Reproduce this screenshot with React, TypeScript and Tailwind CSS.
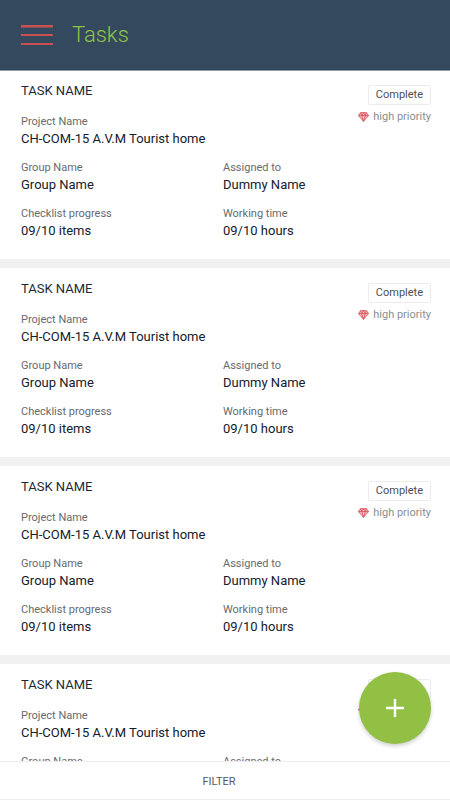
const tasks = [1, 2, 3, 4].map((id) => ({
  id,
  name: "TASK NAME",
  project: "CH-COM-15 A.V.M Tourist home",
  group: "Group Name",
  assignee: "Dummy Name",
  progress: "09/10 items",
  time: "09/10 hours",
  status: "Complete",
  priority: "high priority",
}));

type Task = (typeof tasks)[number];

function GemIcon() {
  return (
    <svg viewBox="0 0 24 22" className="h-2.5 w-[11px] shrink-0" fill="#f6c9cb" stroke="#d5474f" strokeWidth="1.8" strokeLinejoin="round" aria-hidden>
      <path d="M5.5 1.5h13L23 8 12 20.5 1 8z" />
      <path d="M1 8h22M5.5 1.5 8 8l4-6.5L16 8l2.5-6.5M8 8l4 12.5L16 8" fill="none" />
    </svg>
  );
}

function Field({ label, value }: { label: string; value: string }) {
  return (
    <div>
      <dt className="text-[11px] leading-4 text-[#666b70]">{label}</dt>
      <dd className="text-[13px] leading-[18px] text-[#15202b]">{value}</dd>
    </div>
  );
}

function TaskCard({ task }: { task: Task }) {
  return (
    <li className="relative border-b-9 border-[#f1f1f1] bg-white pt-[11px] pr-[25px] pb-[19px] pl-[21px]">
      <h2 className="text-[13px] leading-5 text-[#1c2a38]">{task.name}</h2>
      <dl className="mt-[13px] grid grid-cols-2 gap-y-3">
        <div className="col-span-2">
          <Field label="Project Name" value={task.project} />
        </div>
        <Field label="Group Name" value={task.group} />
        <Field label="Assigned to" value={task.assignee} />
        <Field label="Checklist progress" value={task.progress} />
        <Field label="Working time" value={task.time} />
      </dl>
      <div className="absolute top-[15px] right-[19px] flex flex-col items-end gap-1">
        <span className="rounded-xs border border-[#ececec] px-[7px] text-[11px] leading-[18px] text-[#4b4f54]">{task.status}</span>
        <span className="flex items-center gap-1 text-[11px] leading-4 text-[#8b8e91]">
          <GemIcon />
          {task.priority}
        </span>
      </div>
    </li>
  );
}

export default function App() {
  return (
    <div className="flex h-dvh flex-col bg-white font-['Roboto',sans-serif]">
      <header className="z-10 -mb-px flex h-[71px] shrink-0 items-center gap-[19px] border-b border-[#8c9aa9] bg-[#35495e] px-[21px]">
        <button type="button" aria-label="Open menu">
          <svg viewBox="0 0 32 20" className="h-5 w-8" fill="#c8524f" aria-hidden>
            <path d="M0 0h32v2.5H0zM0 9h32v2H0zM0 18h32v2H0z" />
          </svg>
        </button>
        <h1 className="text-[22px] leading-8 font-light text-[#8fc549]">Tasks</h1>
      </header>
      <main className="relative min-h-0 flex-1">
        <ul className="h-full overflow-y-auto [scrollbar-width:none]">
          {tasks.map((task) => (
            <TaskCard key={task.id} task={task} />
          ))}
        </ul>
        <button
          type="button"
          aria-label="Add task"
          className="absolute right-[19px] bottom-[17px] flex size-[72px] items-center justify-center rounded-full bg-[#92c044] shadow-[0_2px_4px_rgba(0,0,0,0.2)]"
        >
          <svg viewBox="0 0 18 18" className="size-[18px]" stroke="#fff" strokeWidth="2.4" aria-hidden>
            <path d="M9 0v18M0 9h18" />
          </svg>
        </button>
      </main>
      <footer className="shrink-0 border-y border-[#ededed] bg-white">
        <button type="button" className="h-[37px] w-full pt-1 pr-3 text-[11px] text-[#55595d]">
          FILTER
        </button>
      </footer>
    </div>
  );
}
